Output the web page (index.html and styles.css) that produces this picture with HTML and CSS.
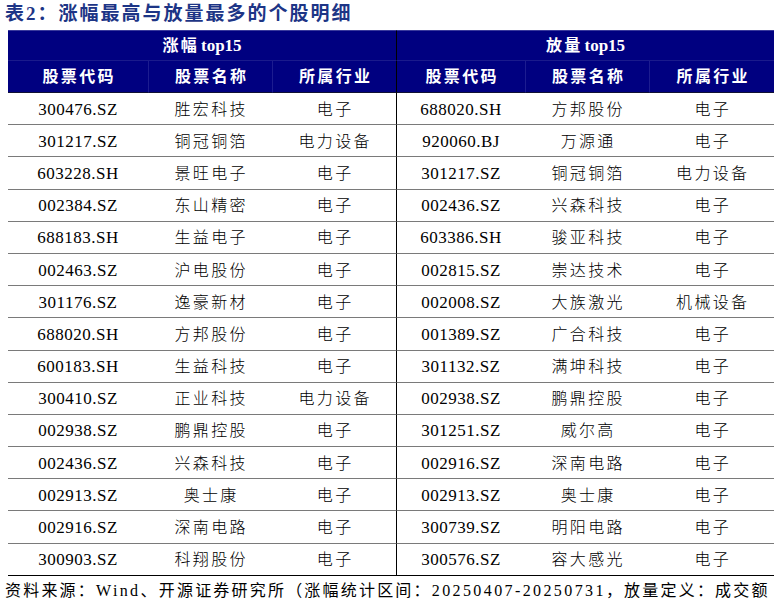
FILE: index.html
```html
<!DOCTYPE html>
<html lang="zh-CN">
<head>
<meta charset="utf-8">
<title>表2</title>
<link rel="stylesheet" href="styles.css">
</head>
<body>
<h1 class="title">表2：涨幅最高与放量最多的个股明细</h1>
<table class="grid">
  <colgroup>
    <col class="c1"><col class="c2"><col class="c3"><col class="c4"><col class="c5"><col class="c6">
  </colgroup>
  <thead>
    <tr class="h1">
      <th colspan="3"><span class="cn">涨幅</span> top15</th>
      <th colspan="3" class="mid"><span class="cn">放量</span> top15</th>
    </tr>
    <tr class="h2">
      <th><span class="cn">股票代码</span></th>
      <th><span class="cn">股票名称</span></th>
      <th><span class="cn">所属行业</span></th>
      <th class="mid"><span class="cn">股票代码</span></th>
      <th><span class="cn">股票名称</span></th>
      <th><span class="cn">所属行业</span></th>
    </tr>
  </thead>
  <tbody>
    <tr><td>300476.SZ</td><td><span class="cn">胜宏科技</span></td><td><span class="cn">电子</span></td><td class="mid">688020.SH</td><td><span class="cn">方邦股份</span></td><td><span class="cn">电子</span></td></tr>
    <tr><td>301217.SZ</td><td><span class="cn">铜冠铜箔</span></td><td><span class="cn">电力设备</span></td><td class="mid">920060.BJ</td><td><span class="cn">万源通</span></td><td><span class="cn">电子</span></td></tr>
    <tr><td>603228.SH</td><td><span class="cn">景旺电子</span></td><td><span class="cn">电子</span></td><td class="mid">301217.SZ</td><td><span class="cn">铜冠铜箔</span></td><td><span class="cn">电力设备</span></td></tr>
    <tr><td>002384.SZ</td><td><span class="cn">东山精密</span></td><td><span class="cn">电子</span></td><td class="mid">002436.SZ</td><td><span class="cn">兴森科技</span></td><td><span class="cn">电子</span></td></tr>
    <tr><td>688183.SH</td><td><span class="cn">生益电子</span></td><td><span class="cn">电子</span></td><td class="mid">603386.SH</td><td><span class="cn">骏亚科技</span></td><td><span class="cn">电子</span></td></tr>
    <tr><td>002463.SZ</td><td><span class="cn">沪电股份</span></td><td><span class="cn">电子</span></td><td class="mid">002815.SZ</td><td><span class="cn">崇达技术</span></td><td><span class="cn">电子</span></td></tr>
    <tr><td>301176.SZ</td><td><span class="cn">逸豪新材</span></td><td><span class="cn">电子</span></td><td class="mid">002008.SZ</td><td><span class="cn">大族激光</span></td><td><span class="cn">机械设备</span></td></tr>
    <tr><td>688020.SH</td><td><span class="cn">方邦股份</span></td><td><span class="cn">电子</span></td><td class="mid">001389.SZ</td><td><span class="cn">广合科技</span></td><td><span class="cn">电子</span></td></tr>
    <tr><td>600183.SH</td><td><span class="cn">生益科技</span></td><td><span class="cn">电子</span></td><td class="mid">301132.SZ</td><td><span class="cn">满坤科技</span></td><td><span class="cn">电子</span></td></tr>
    <tr><td>300410.SZ</td><td><span class="cn">正业科技</span></td><td><span class="cn">电力设备</span></td><td class="mid">002938.SZ</td><td><span class="cn">鹏鼎控股</span></td><td><span class="cn">电子</span></td></tr>
    <tr><td>002938.SZ</td><td><span class="cn">鹏鼎控股</span></td><td><span class="cn">电子</span></td><td class="mid">301251.SZ</td><td><span class="cn">威尔高</span></td><td><span class="cn">电子</span></td></tr>
    <tr><td>002436.SZ</td><td><span class="cn">兴森科技</span></td><td><span class="cn">电子</span></td><td class="mid">002916.SZ</td><td><span class="cn">深南电路</span></td><td><span class="cn">电子</span></td></tr>
    <tr><td>002913.SZ</td><td><span class="cn">奥士康</span></td><td><span class="cn">电子</span></td><td class="mid">002913.SZ</td><td><span class="cn">奥士康</span></td><td><span class="cn">电子</span></td></tr>
    <tr><td>002916.SZ</td><td><span class="cn">深南电路</span></td><td><span class="cn">电子</span></td><td class="mid">300739.SZ</td><td><span class="cn">明阳电路</span></td><td><span class="cn">电子</span></td></tr>
    <tr class="last"><td>300903.SZ</td><td><span class="cn">科翔股份</span></td><td><span class="cn">电子</span></td><td class="mid">300576.SZ</td><td><span class="cn">容大感光</span></td><td><span class="cn">电子</span></td></tr>
  </tbody>
</table>
<p class="source">资料来源：<span class="lat">Wind</span>、开源证券研究所（涨幅统计区间：<span class="lat">20250407-20250731</span>，放量定义：成交额</p>
</body>
</html>
```
FILE: styles.css
```css
html, body {
  margin: 0;
  padding: 0;
  background: #ffffff;
}
body {
  width: 780px;
  height: 607px;
  overflow: hidden;
  font-family: "Liberation Serif", "Noto Sans CJK SC", serif;
  color: #000;
}
.title {
  margin: 0 0 4px 0;
  padding: 2px 0 0 5px;
  height: 24px;
  line-height: 24px;
  font-size: 19px;
  font-weight: bold;
  letter-spacing: 2px;
  color: #1d3586;
  white-space: nowrap;
}
.grid {
  margin-left: 8px;
  width: 766px;
  border-collapse: separate;
  border-spacing: 0;
  table-layout: fixed;
}
.c1 { width: 140px; }
.c2 { width: 124px; }
.c3 { width: 124px; }
.c4 { width: 129px; }
.c5 { width: 124px; }
.c6 { width: 125px; }
.cn {
  letter-spacing: 2.3px;
  margin-right: -2.3px;
  line-height: 20px;
}
.grid th {
  background: #000080;
  color: #ffffff;
  font-weight: bold;
  font-size: 17px;
  line-height: 20px;
  padding: 0;
  text-align: center;
  vertical-align: middle;
  box-sizing: border-box;
}
.grid th .cn {
  font-size: 16px;
}
.h1 th {
  height: 31px;
  padding-top: 1px;
  border-top: 1px solid #3a3a9c;
  border-bottom: 1px solid #1a1a8c;
}
.h2 th {
  height: 32px;
  padding-top: 1px;
  border-bottom: 1px solid #111133;
  border-left: 1px solid #1c1c90;
}
.h2 th:first-child {
  border-left: none;
}
.grid td {
  height: 32.2px;
  box-sizing: border-box;
  padding: 2px 0 0 0;
  text-align: center;
  vertical-align: middle;
  font-size: 17px;
  line-height: 20px;
  letter-spacing: 0.5px;
  border-bottom: 1px solid #7a7a7a;
  white-space: nowrap;
}
.grid td .cn {
  font-size: 16px;
  font-weight: 300;
}
.grid .mid {
  border-left: 1px solid #000000;
}
.grid tr.last td {
  border-bottom: 1px solid #000000;
}
.source {
  margin: 0;
  padding-left: 5px;
  height: 30px;
  line-height: 30px;
  font-size: 16px;
  letter-spacing: 2.2px;
  white-space: nowrap;
  overflow: hidden;
  color: #000;
}
.source .lat {
  font-size: 16px;
  letter-spacing: 2.4px;
}
```
